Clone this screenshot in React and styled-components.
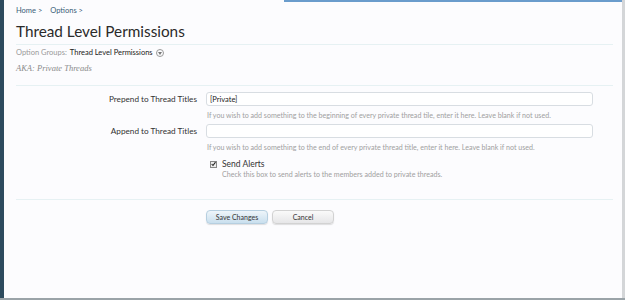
import React from 'react'
import styled, { createGlobalStyle } from 'styled-components'

const Global = createGlobalStyle`
  html, body { margin: 0; padding: 0; background: #fcfcfe; }
  body { font-family: Lato, "Open Sans", "DejaVu Sans", sans-serif; }
`

const Frame = styled.div`
  width: 625px;
  height: 300px;
  display: flex;
  box-sizing: border-box;
  border-bottom: 2px solid #9aa3a8;
  overflow: hidden;
`

const SideStrip = styled.div`
  width: 4px;
  flex: none;
  background: #2d4b5e;
`

const Panel = styled.div`
  flex: 1;
  background: #fcfcfe;
  border-right: 3px solid #d4d6d8;
  position: relative;
  padding: 6px 9px 0 12px;
`

const TopGlow = styled.div`
  position: absolute;
  top: 0;
  left: 280px;
  right: 0;
  height: 2px;
  background: #6a9ccc;
`

const Crumbs = styled.div`
  font-size: 7.5px;
  color: #3a5d77;
  display: flex;
  gap: 8px;
  line-height: 10px;
`

const Title = styled.h1`
  margin: 3px 0 0;
  font-size: 15.3px;
  font-weight: 400;
  color: #2a2a2a;
  line-height: 24px;
  padding-bottom: 1px;
  border-bottom: 1px solid #e6f1f3;
`

const GroupLine = styled.div`
  margin-top: 2px;
  font-size: 7.5px;
  line-height: 12px;
  color: #9a9a9a;
  display: flex;
  align-items: center;
  gap: 3px;
`

const Dark = styled.span`
  color: #222;
`

const Circle = styled.span`
  display: inline-flex;
  width: 8px;
  height: 8px;
  border: 1px solid #999;
  border-radius: 50%;
  box-sizing: border-box;
  align-items: center;
  justify-content: center;
`

const Aka = styled.div`
  margin-top: 3px;
  font-family: "Liberation Serif", "DejaVu Serif", serif;
  font-style: italic;
  font-size: 8.5px;
  color: #8a8a8a;
  line-height: 12px;
  padding-bottom: 11px;
  border-bottom: 1px solid #e6f1f3;
`

const Form = styled.div`
  display: grid;
  grid-template-columns: 181px 387px;
  column-gap: 9px;
  padding-top: 6px;
  padding-bottom: 16px;
  border-bottom: 1px solid #e6f1f3;
`

const Label = styled.div`
  text-align: right;
  font-size: 8.2px;
  color: #333;
  line-height: 14px;
`

const Field = styled.div`
  display: flex;
  flex-direction: column;
  margin-bottom: ${({ $gap }) => $gap || 3}px;
`

const Input = styled.div`
  height: 14px;
  box-sizing: border-box;
  border: 1px solid #d8dde2;
  border-radius: 3px;
  background: #fff;
  font-size: 7.5px;
  color: #222;
  padding: 0 3px;
  display: flex;
  align-items: center;
`

const Hint = styled.div`
  font-size: 7.1px;
  color: #a0a0a0;
  line-height: 10px;
  margin-top: 5px;
  padding-left: 1px;
`

const CheckRow = styled.div`
  display: flex;
  align-items: center;
  gap: 5px;
  padding-left: 4px;
  font-size: 8.5px;
  color: #333;
  line-height: 12px;
`

const Box = styled.span`
  width: 7px;
  height: 7px;
  box-sizing: border-box;
  border: 1px solid #888;
  background: #eee;
  display: inline-flex;
  align-items: center;
  justify-content: center;
`

const SubHint = styled(Hint)`
  margin-top: 0;
  padding-left: 16px;
`

const Buttons = styled.div`
  display: flex;
  gap: 4px;
  padding: 10px 0 0 190px;
`

const Button = styled.div`
  width: ${({ $w }) => $w}px;
  height: 14px;
  box-sizing: border-box;
  border-radius: 4px;
  font-size: 7px;
  color: #333;
  display: flex;
  align-items: center;
  justify-content: center;
  border: 1px solid ${({ $primary }) => ($primary ? '#b6cfe0' : '#d2d2d2')};
  background: ${({ $primary }) =>
    $primary
      ? 'linear-gradient(#eef5fa, #c9dfee)'
      : 'linear-gradient(#fafafa, #e6e6e8)'};
  box-shadow: 0 1px 1px rgba(0, 0, 0, 0.12);
`

export default function App() {
  return (
    <>
      <Global />
      <Frame>
        <SideStrip />
        <Panel>
          <TopGlow />
          <Crumbs>
            <span>Home &gt;</span>
            <span>Options &gt;</span>
          </Crumbs>
          <Title>Thread Level Permissions</Title>
          <GroupLine>
            Option Groups: <Dark>Thread Level Permissions</Dark>
            <Circle>
              <svg width="4" height="3" viewBox="0 0 4 3">
                <path d="M0 0 L4 0 L2 3 Z" fill="#777" />
              </svg>
            </Circle>
          </GroupLine>
          <Aka>AKA: Private Threads</Aka>
          <Form>
            <Label>Prepend to Thread Titles</Label>
            <Field>
              <Input>[Private]</Input>
              <Hint>
                If you wish to add something to the beginning of every private thread tile, enter it here. Leave blank if not used.
              </Hint>
            </Field>
            <Label>Append to Thread Titles</Label>
            <Field $gap={5}>
              <Input />
              <Hint>
                If you wish to add something to the end of every private thread title, enter it here. Leave blank if not used.
              </Hint>
            </Field>
            <span />
            <Field>
              <CheckRow>
                <Box>
                  <svg width="6" height="6" viewBox="0 0 6 6">
                    <path d="M0.8 3 L2.4 4.8 L5.4 0.8" stroke="#222" strokeWidth="1.3" fill="none" />
                  </svg>
                </Box>
                Send Alerts
              </CheckRow>
              <SubHint>Check this box to send alerts to the members added to private threads.</SubHint>
            </Field>
          </Form>
          <Buttons>
            <Button $primary $w={62}>Save Changes</Button>
            <Button $w={62}>Cancel</Button>
          </Buttons>
        </Panel>
      </Frame>
    </>
  )
}
